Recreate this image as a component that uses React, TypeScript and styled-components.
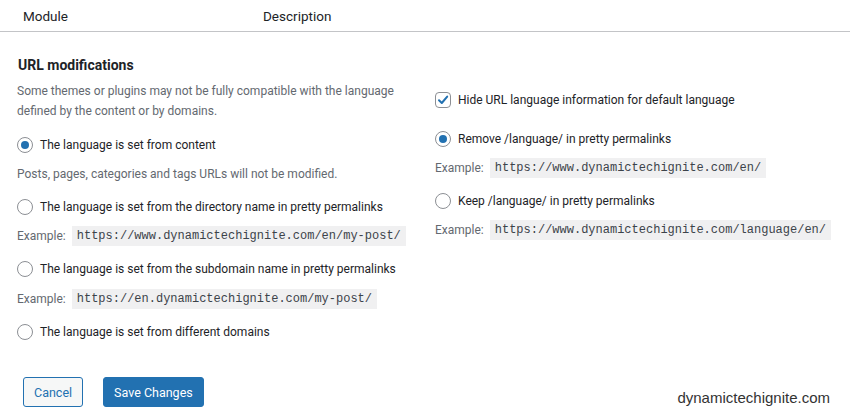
import React from "react";
import styled, { createGlobalStyle } from "styled-components";

const GlobalStyle = createGlobalStyle`
  html, body {
    margin: 0;
    padding: 0;
    background: #ffffff;
  }
  body {
    font-family: Roboto, "Noto Sans", sans-serif;
    color: #1d2327;
  }
`;

const Page = styled.div`
  width: 850px;
  height: 419px;
  background: #ffffff;
  overflow: hidden;
`;

const HeaderRow = styled.div`
  display: flex;
  align-items: center;
  height: 31px;
  border-bottom: 1px solid #c3c4c7;
  font-size: 13.5px;
  color: #1d2327;
`;

const HeaderCell = styled.div<{ $width?: number }>`
  width: ${({ $width }) => ($width ? `${$width}px` : "auto")};
  padding-left: 23px;
  box-sizing: border-box;
`;

const Body = styled.div`
  padding: 23px 0 0 17px;
`;

const Title = styled.h3`
  margin: 0 0 6px 1px;
  font-size: 14px;
  font-weight: 700;
  line-height: 20px;
  color: #1d2327;
`;

const Columns = styled.div`
  display: grid;
  grid-template-columns: 414px 1fr;
  column-gap: 4px;
`;

const Column = styled.div<{ $top?: number }>`
  display: flex;
  flex-direction: column;
  padding-top: ${({ $top }) => $top ?? 0}px;
`;

const Note = styled.p`
  margin: 0 0 14px;
  font-size: 12px;
  line-height: 20px;
  color: #646970;
`;

const Option = styled.label<{ $gap?: number }>`
  display: flex;
  align-items: center;
  gap: 7px;
  height: 20px;
  font-size: 12px;
  color: #1d2327;
  white-space: nowrap;
  margin-bottom: ${({ $gap }) => $gap ?? 9}px;
`;

const Radio = styled.span<{ $checked?: boolean }>`
  width: 14px;
  height: 14px;
  border-radius: 50%;
  border: 1px solid #8c8f94;
  background: #ffffff;
  display: flex;
  align-items: center;
  justify-content: center;
  flex-shrink: 0;

  &::after {
    content: "";
    width: 8px;
    height: 8px;
    border-radius: 50%;
    background: ${({ $checked }) => ($checked ? "#2271b1" : "transparent")};
  }
`;

const Checkbox = styled.span`
  width: 14px;
  height: 14px;
  border-radius: 4px;
  border: 1px solid #8c8f94;
  background: #ffffff;
  display: flex;
  align-items: center;
  justify-content: center;
  flex-shrink: 0;
`;

const Desc = styled.div<{ $gap?: number }>`
  display: flex;
  align-items: center;
  gap: 6px;
  height: 20px;
  font-size: 12px;
  color: #646970;
  white-space: nowrap;
  margin-bottom: ${({ $gap }) => $gap ?? 13}px;
`;

const Code = styled.code`
  font-family: "Liberation Mono", "DejaVu Sans Mono", monospace;
  font-size: 12px;
  line-height: 20px;
  padding: 0 5px;
  background: #f0f0f1;
  color: #3c434a;
`;

const Footer = styled.div`
  display: flex;
  align-items: flex-start;
  gap: 20px;
  padding: 26px 20px 0 23px;
`;

const Button = styled.button<{ $primary?: boolean }>`
  height: 30px;
  padding: 0 10px;
  border-radius: 3px;
  font-family: Roboto, "Noto Sans", sans-serif;
  font-size: 12.5px;
  cursor: pointer;
  border: 1px solid #2271b1;
  background: ${({ $primary }) => ($primary ? "#2271b1" : "#f6f7f7")};
  color: ${({ $primary }) => ($primary ? "#ffffff" : "#2271b1")};
`;

const Watermark = styled.span`
  margin-left: auto;
  margin-top: 12px;
  font-family: "Liberation Sans", Arial, sans-serif;
  font-size: 15px;
  color: #333333;
`;

const Check = () => (
  <svg width="12" height="12" viewBox="0 0 12 12" fill="none">
    <path
      d="M2 6.2 L4.8 9 L10.2 2.6"
      stroke="#2271b1"
      strokeWidth="2"
      strokeLinecap="round"
      strokeLinejoin="round"
    />
  </svg>
);

export default function App() {
  return (
    <Page>
      <GlobalStyle />
      <HeaderRow>
        <HeaderCell $width={240}>Module</HeaderCell>
        <HeaderCell>Description</HeaderCell>
      </HeaderRow>
      <Body>
        <Title>URL modifications</Title>
        <Columns>
          <Column>
            <Note>
              Some themes or plugins may not be fully compatible with the language defined by the
              content or by domains.
            </Note>
            <Option>
              <Radio $checked />
              The language is set from content
            </Option>
            <Desc $gap={13}>Posts, pages, categories and tags URLs will not be modified.</Desc>
            <Option>
              <Radio />
              The language is set from the directory name in pretty permalinks
            </Option>
            <Desc>
              Example: <Code>https://www.dynamictechignite.com/en/my-post/</Code>
            </Desc>
            <Option $gap={10}>
              <Radio />
              The language is set from the subdomain name in pretty permalinks
            </Option>
            <Desc>
              Example: <Code>https://en.dynamictechignite.com/my-post/</Code>
            </Desc>
            <Option>
              <Radio />
              The language is set from different domains
            </Option>
          </Column>
          <Column $top={9}>
            <Option $gap={19}>
              <Checkbox>
                <Check />
              </Checkbox>
              Hide URL language information for default language
            </Option>
            <Option>
              <Radio $checked />
              Remove /language/ in pretty permalinks
            </Option>
            <Desc>
              Example: <Code>https://www.dynamictechignite.com/en/</Code>
            </Desc>
            <Option>
              <Radio />
              Keep /language/ in pretty permalinks
            </Option>
            <Desc>
              Example: <Code>https://www.dynamictechignite.com/language/en/</Code>
            </Desc>
          </Column>
        </Columns>
      </Body>
      <Footer>
        <Button>Cancel</Button>
        <Button $primary>Save Changes</Button>
        <Watermark>dynamictechignite.com</Watermark>
      </Footer>
    </Page>
  );
}
